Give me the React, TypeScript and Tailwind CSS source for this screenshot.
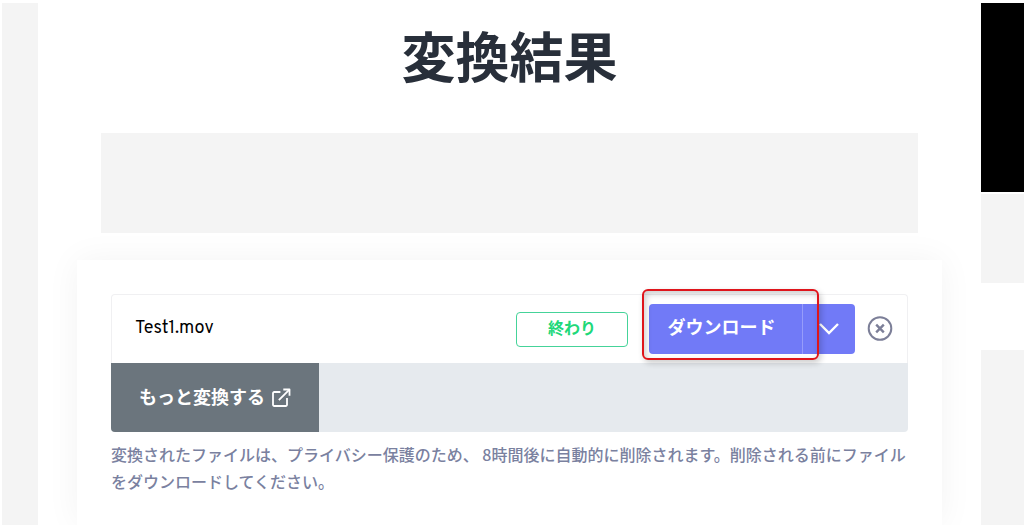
function OpenIcon() {
  return (
    <svg
      viewBox="0 0 20 20"
      className="size-5"
      fill="none"
      stroke="currentColor"
      strokeWidth="1.8"
      strokeLinecap="square"
      strokeLinejoin="round"
      aria-hidden="true"
    >
      <path d="M8.5 4H3.2A1.2 1.2 0 0 0 2 5.2v11.6A1.2 1.2 0 0 0 3.2 18h11.6a1.2 1.2 0 0 0 1.2-1.2V11" />
      <path d="M13.2 1.5h5.3v5.3" />
      <path d="M8.5 11.5 18 2" />
    </svg>
  );
}

function ChevronIcon() {
  return (
    <svg viewBox="0 0 20 12" className="h-3 w-5" fill="none" stroke="currentColor" strokeWidth="2.4" aria-hidden="true">
      <path d="m1 1 9 9 9-9" />
    </svg>
  );
}

function CloseIcon() {
  return (
    <svg viewBox="0 0 26 26" className="size-[26px]" fill="none" stroke="currentColor" strokeWidth="2" aria-hidden="true">
      <circle cx="13" cy="12.5" r="11.3" />
      <path strokeWidth="2.4" d="m9.2 8.7 7.6 7.6M16.8 8.7l-7.6 7.6" />
    </svg>
  );
}

function ResultRow({ name, status }: { name: string; status: string }) {
  return (
    <div className="flex h-[69px] items-center rounded-t border border-b-0 border-[#f0f0f2] pr-3.5 pl-[23px]">
      <span className="flex-1 font-['Overpass','Roboto',sans-serif] text-lg text-black">{name}</span>
      <span className="flex h-[35px] w-28 justify-center rounded border border-[#45d399] pt-0.5 text-base font-bold text-[#20d879]">
        {status}
      </span>

      {/* Download + format menu */}
      <div className="relative ml-[21px] flex h-[50px] rounded bg-[#717af7] text-white">
        <button type="button" className="w-[153px] pr-2 pb-1.5 text-lg font-bold">
          ダウンロード
        </button>
        <button
          type="button"
          aria-label="その他の形式"
          className="flex w-[53px] items-center justify-center border-l border-[#969cfa]"
        >
          <ChevronIcon />
        </button>
        <div className="pointer-events-none absolute -top-[15px] -left-[7px] h-[71px] w-[177px] rounded-md border-2 border-[#df151b] shadow-[2px_3px_6px_rgba(0,0,0,0.2),inset_2px_3px_6px_rgba(0,0,0,0.2)]" />
      </div>

      <button type="button" aria-label="削除" className="ml-3 text-[#7c7f98]">
        <CloseIcon />
      </button>
    </div>
  );
}

export default function App() {
  return (
    <div className="flex min-h-screen overflow-hidden bg-white pt-[3px] pl-0.5 font-['Noto_Sans_CJK_JP',sans-serif]">
      <aside className="w-9 shrink-0 bg-[#f4f4f4]" />

      <main className="flex min-w-0 flex-1 flex-col px-[39px]">
        <h1 className="mt-3 text-center text-[54px] leading-20 font-bold text-[#282f3a]">変換結果</h1>

        <div className="mx-6 mt-[38px] h-[100px] bg-[#f4f4f4]" />

        {/* Results card */}
        <section className="mt-[27px] flex-1 bg-white px-[34px] pt-[34px] pb-7 shadow-[0_0_32px_rgba(0,0,0,0.05)]">
          <ResultRow name="Test1.mov" status="終わり" />
          <div className="h-[69px] overflow-hidden rounded-b bg-[#e6eaee]">
            <button
              type="button"
              className="flex h-full w-[208px] items-center justify-center gap-1.5 bg-[#6b757d] text-lg font-bold text-white"
            >
              <span className="pb-1">もっと変換する</span>
              <OpenIcon />
            </button>
          </div>
          <p className="mt-[9px] text-base leading-[27px] font-medium text-[#7a819f]">
            変換されたファイルは、プライバシー保護のため、 8時間後に自動的に削除されます。削除される前にファイルをダウンロードしてください。
          </p>
        </section>
      </main>

      <aside className="flex w-[43px] shrink-0 flex-col">
        <div className="h-[189px] bg-black" />
        <div className="mt-0.5 h-[89px] bg-[#f4f4f4]" />
        <div className="mt-[67px] flex-1 bg-[#f4f4f4]" />
      </aside>
    </div>
  );
}
